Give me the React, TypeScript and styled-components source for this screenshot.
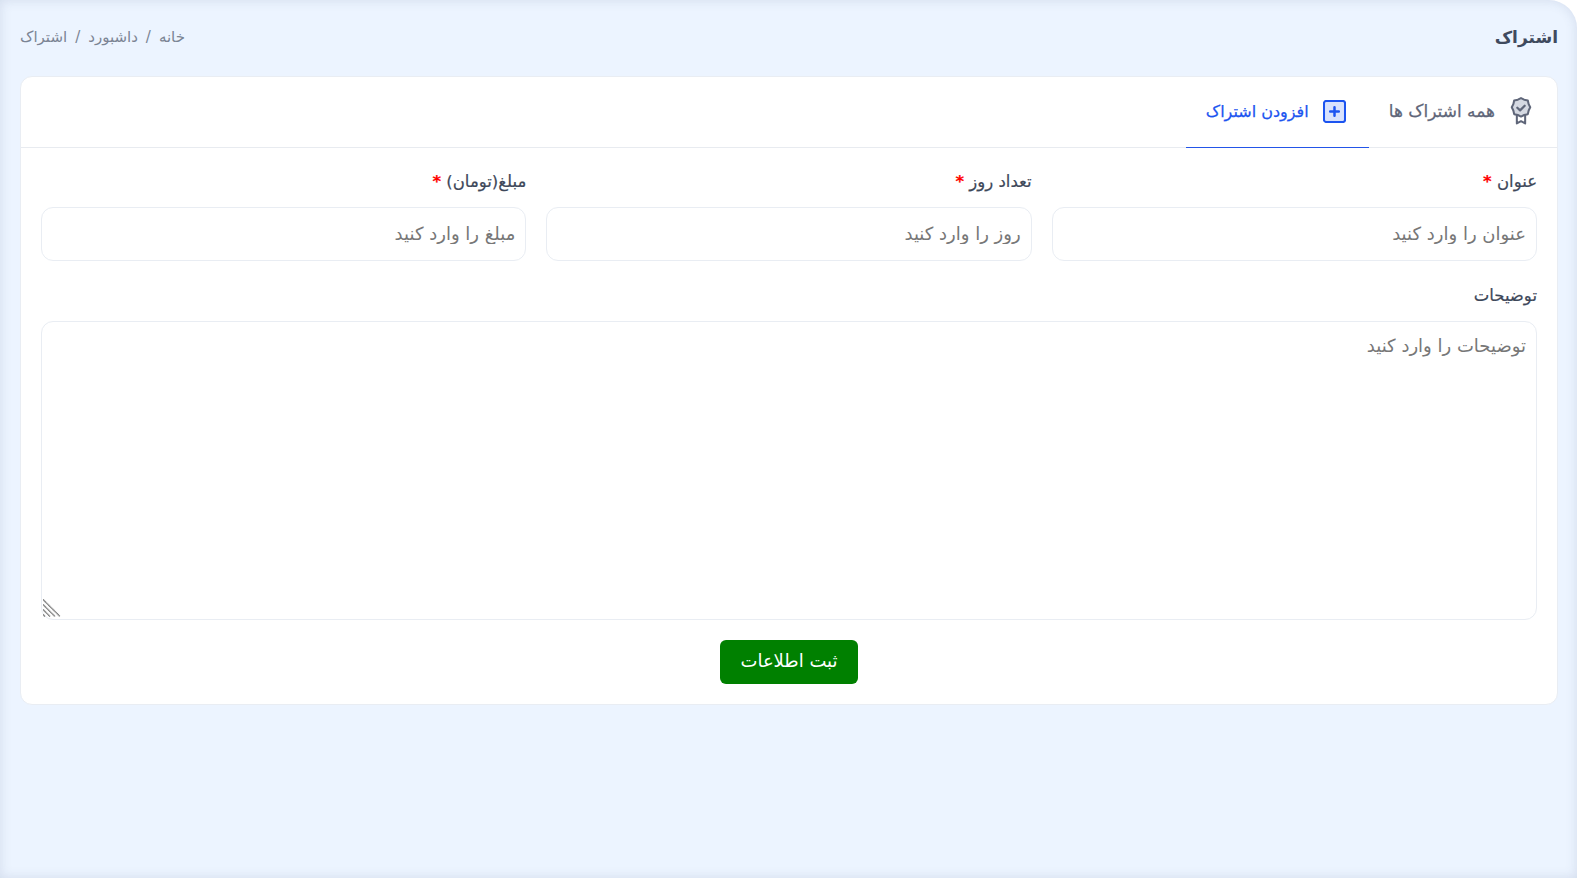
import React from "react";
import styled, { createGlobalStyle } from "styled-components";

const Global = createGlobalStyle`
  html, body { margin: 0; padding: 0; height: 100%; background: #fff; }
  #root { height: 100%; }
  * { box-sizing: border-box; }
  body { font-family: "DejaVu Sans", "Noto Sans", sans-serif; }
`;

const Page = styled.div`
  height: 878px;
  background: #ecf4ff;
  border-radius: 0 28px 0 0;
  box-shadow: inset 0 0 12px rgba(60, 80, 120, 0.14);
  padding: 0 19px 0 20px;
  direction: rtl;
`;

const Header = styled.header`
  height: 76px;
  display: flex;
  align-items: center;
  justify-content: space-between;
  padding-bottom: 2px;
`;

const Title = styled.h1`
  margin: 0;
  font-size: 17px;
  font-weight: 700;
  color: #3f4a5e;
`;

const Crumbs = styled.nav`
  display: flex;
  gap: 8px;
  font-size: 15px;
  color: #7b8494;
`;

const Card = styled.section`
  background: #fff;
  border: 1px solid #e9edf3;
  border-radius: 12px;
  height: 629px;
`;

const Tabs = styled.div`
  display: flex;
  height: 71px;
  border-bottom: 1px solid #e8ebf0;
`;

const Tab = styled.div<{ $active?: boolean }>`
  display: flex;
  align-items: center;
  gap: 14px;
  padding: 0 ${(p) => (p.$active ? "23px" : "24px")} 2px 20px;
  margin-bottom: -1px;
  font-size: ${(p) => (p.$active ? "16px" : "17px")};
  -webkit-text-stroke: 0.25px currentColor;
  color: ${(p) => (p.$active ? "#1c54f0" : "#5f6679")};
  border-bottom: 1px solid ${(p) => (p.$active ? "#2355e8" : "transparent")};
`;

const Form = styled.form`
  padding: 19px 20px 20px;
  display: flex;
  flex-direction: column;
`;

const Row = styled.div`
  display: grid;
  grid-template-columns: repeat(3, 1fr);
  gap: 20px;
  margin-bottom: 20px;
`;

const Field = styled.label`
  display: flex;
  flex-direction: column;
  gap: 12px;
`;

const LabelText = styled.span`
  font-size: 16.5px;
  line-height: 30px;
  height: 28px;
  -webkit-text-stroke: 0.2px currentColor;
  color: #3d4759;
`;

const Star = styled.span`
  color: #f00;
  font-weight: 700;
`;

const Input = styled.input`
  height: 54px;
  border: 1px solid #e9edf3;
  border-radius: 12px;
  padding: 0 10px 2px;
  font: inherit;
  font-size: 18px;
  direction: rtl;
  outline: none;
  &::placeholder { color: #777; opacity: 1; }
`;

const AreaWrap = styled.div`
  position: relative;
`;

const Area = styled.textarea`
  height: 299px;
  width: 100%;
  display: block;
  border: 1px solid #e9edf3;
  border-radius: 12px;
  padding: 13px 10px;
  font: inherit;
  font-size: 18px;
  direction: rtl;
  resize: vertical;
  outline: none;
  &::placeholder { color: #777; opacity: 1; }
  &::-webkit-resizer { background: transparent; }
`;

const Hatch = styled.svg`
  position: absolute;
  left: 2px;
  bottom: 3px;
  pointer-events: none;
`;

const Actions = styled.div`
  display: flex;
  justify-content: center;
  margin-top: 20px;
`;

const Submit = styled.button`
  width: 138px;
  height: 44px;
  border: 0;
  border-radius: 6px;
  background: #008000;
  color: #fff;
  padding: 0 0 3px;
  font: inherit;
  font-size: 18px;
`;

const AwardIcon = () => (
  <svg width="24" height="28" viewBox="-1 0 26 30" fill="none">
    <path d="M7.5 19v9.5l4.5-2.5 4.5 2.5V19" stroke="#5f6679" strokeWidth="2.2" strokeLinejoin="round"/>
    <path d="M12 1l3.4 1.7 4 .9.9 4 1.7 3.4-1.7 3.4-.9 4-4 .9L12 21l-3.4-1.7-4-.9-.9-4L2 11l1.7-3.4.9-4 4-.9z" fill="#d5d9e2" stroke="#5f6679" strokeWidth="2.2" strokeLinejoin="round"/>
    <path d="M8 11.5l3 2.8 5-5" stroke="#5f6679" strokeWidth="2.4" strokeLinecap="round" strokeLinejoin="round"/>
  </svg>
);

const PlusIcon = () => (
  <svg width="23" height="23" viewBox="0 0 24 24" fill="none">
    <rect x="1" y="1" width="22" height="22" rx="2.5" fill="#d8e2fd" stroke="#1c54f0" strokeWidth="2.2"/>
    <path d="M12 7.5v9M7.5 12h9" stroke="#1c54f0" strokeWidth="2.6" strokeLinecap="round"/>
  </svg>
);

export default function App() {
  return (
    <>
      <Global />
      <Page>
        <Header>
          <Title>اشتراک</Title>
          <Crumbs>
            <span>خانه</span><span>/</span><span>داشبورد</span><span>/</span><span>اشتراک</span>
          </Crumbs>
        </Header>
        <Card>
          <Tabs>
            <Tab><AwardIcon />همه اشتراک ها</Tab>
            <Tab $active><PlusIcon />افزودن اشتراک</Tab>
          </Tabs>
          <Form>
            <Row>
              <Field>
                <LabelText>عنوان <Star>*</Star></LabelText>
                <Input placeholder="عنوان را وارد کنید" />
              </Field>
              <Field>
                <LabelText>تعداد روز <Star>*</Star></LabelText>
                <Input placeholder="روز را وارد کنید" />
              </Field>
              <Field>
                <LabelText>مبلغ(تومان) <Star>*</Star></LabelText>
                <Input placeholder="مبلغ را وارد کنید" />
              </Field>
            </Row>
            <Field>
              <LabelText>توضیحات</LabelText>
              <AreaWrap>
                <Area placeholder="توضیحات را وارد کنید" />
                <Hatch width="18" height="18" viewBox="0 0 18 18" fill="none" stroke="#777" strokeWidth="1.5" strokeDasharray="1.2 0.3">
                  <path d="M0 0.5L17 17.5M0 5.5L12 17.5M0 10.5L7 17.5M0 15.5L2 17.5" />
                </Hatch>
              </AreaWrap>
            </Field>
            <Actions>
              <Submit type="button">ثبت اطلاعات</Submit>
            </Actions>
          </Form>
        </Card>
      </Page>
    </>
  );
}
